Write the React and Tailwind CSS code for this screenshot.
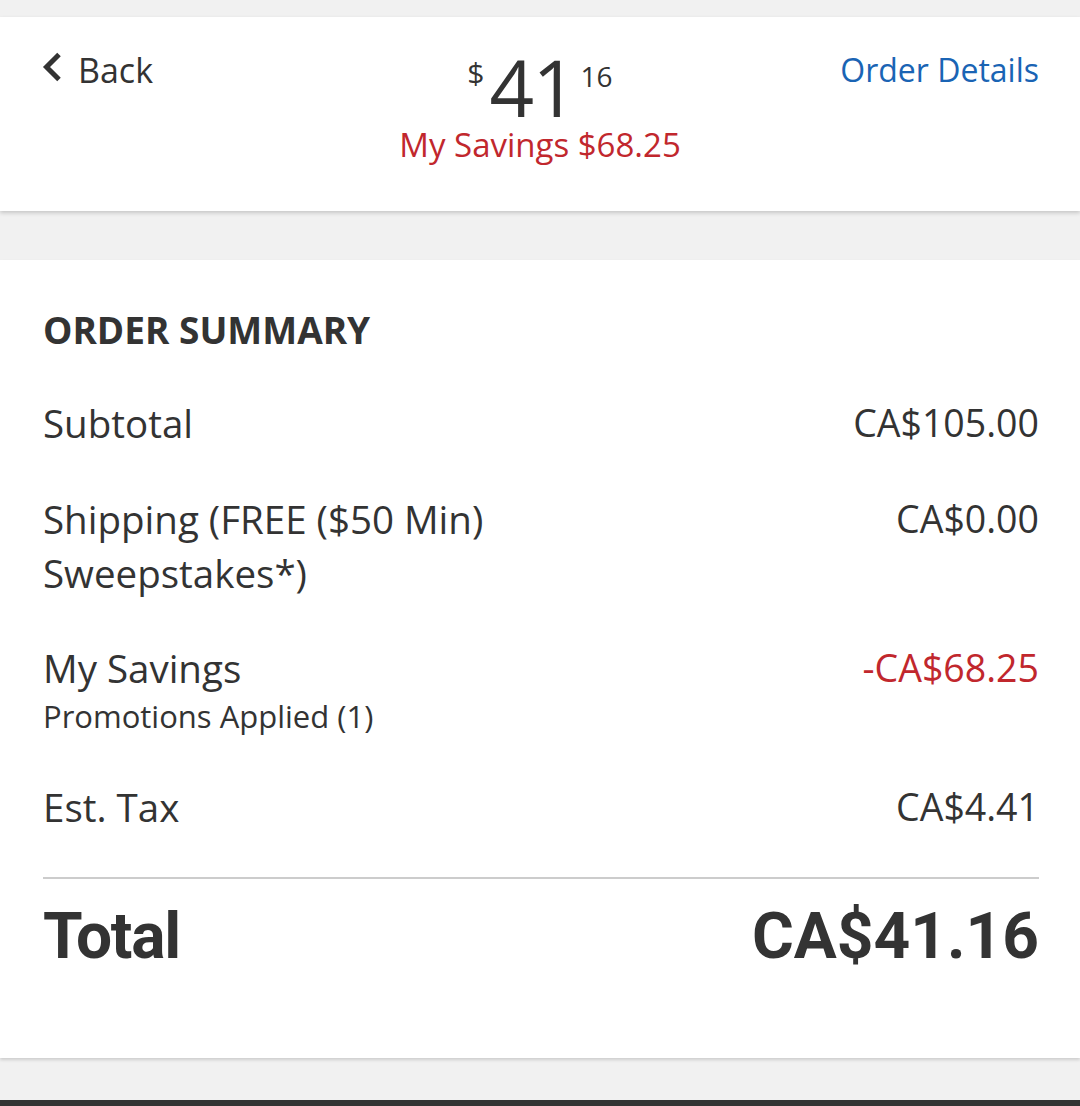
// Order summary screen — header with price, then the summary card
const body = { fontFamily: '"Open Sans", "Noto Sans", sans-serif' }
const heavy = { fontFamily: 'Roboto, "Noto Sans", sans-serif' }

function Row({ label, value, sub, valueClass = 'text-[#333]' }) {
  return (
    <div className="flex justify-between items-start">
      <div>
        <div className="text-[38.5px] leading-[54px] text-[#333] max-w-[540px]">{label}</div>
        {sub && <div className="text-[31px] leading-[36px] text-[#333] mt-[3px]">{sub}</div>}
      </div>
      <div className={`text-[37.5px] leading-[54px] ${valueClass}`}>{value}</div>
    </div>
  )
}

export default function App() {
  return (
    <div className="bg-[#f1f1f1] min-h-[1106px] w-[1080px] flex flex-col pt-[17px]" style={body}>
      {/* header */}
      <div className="bg-white h-[194px] shadow-[0_2px_4px_rgba(0,0,0,0.18)] px-[41px] pt-[31px] flex justify-between items-start">
        <div className="flex items-start gap-[16px] w-[260px]">
          <svg width="20" height="30" viewBox="0 0 20 30" className="mt-[4px] ml-[1px]">
            <polyline points="17,2.5 4.5,15 17,27.5" fill="none" stroke="#333" strokeWidth="5" />
          </svg>
          <span className="text-[34px] leading-[44px] text-[#333]">Back</span>
        </div>

        <div className="flex flex-col items-center">
          <div className="flex items-start text-[#333]">
            <span className="text-[30px] leading-[30px] mt-[10px]">$</span>
            <span className="text-[78px] leading-[78px] tracking-[-0.02em] ml-[5px]">41</span>
            <span className="text-[28px] leading-[28px] mt-[14px] ml-[5px]">16</span>
          </div>
          <div className="text-[33px] leading-[36px] text-[#c1272d] mt-[1px]">My Savings $68.25</div>
        </div>

        <div className="w-[260px] flex justify-end">
          <span className="text-[32px] leading-[44px] text-[#1a64b4] whitespace-nowrap">Order Details</span>
        </div>
      </div>

      {/* summary card */}
      <div className="bg-white mt-[49px] h-[798px] shadow-[0_2px_3px_rgba(0,0,0,0.15)] pl-[43px] pr-[41px] pt-[48px] flex flex-col">
        <div className="text-[37px] leading-[44px] font-bold text-[#333]">ORDER SUMMARY</div>
        <div className="mt-[44px]">
          <Row label="Subtotal" value="CA$105.00" />
        </div>
        <div className="mt-[42px]">
          <Row label="Shipping (FREE ($50 Min) Sweepstakes*)" value="CA$0.00" />
        </div>
        <div className="mt-[41px]">
          <Row label="My Savings" sub="Promotions Applied (1)" value="-CA$68.25" valueClass="text-[#c1272d]" />
        </div>
        <div className="mt-[46px]">
          <Row label="Est. Tax" value="CA$4.41" />
        </div>
        <div className="mt-[43px] h-[2px] bg-[#cccccc]" />
        <div className="mt-[18px] flex justify-between items-start text-[#333] font-bold" style={heavy}>
          <span className="text-[64px] leading-[80px] tracking-[-0.02em]">Total</span>
          <span className="text-[64px] leading-[80px]">CA$41.16</span>
        </div>
      </div>

      <div className="flex-1" />
      <div className="h-[6px] bg-[#333]" />
    </div>
  )
}
